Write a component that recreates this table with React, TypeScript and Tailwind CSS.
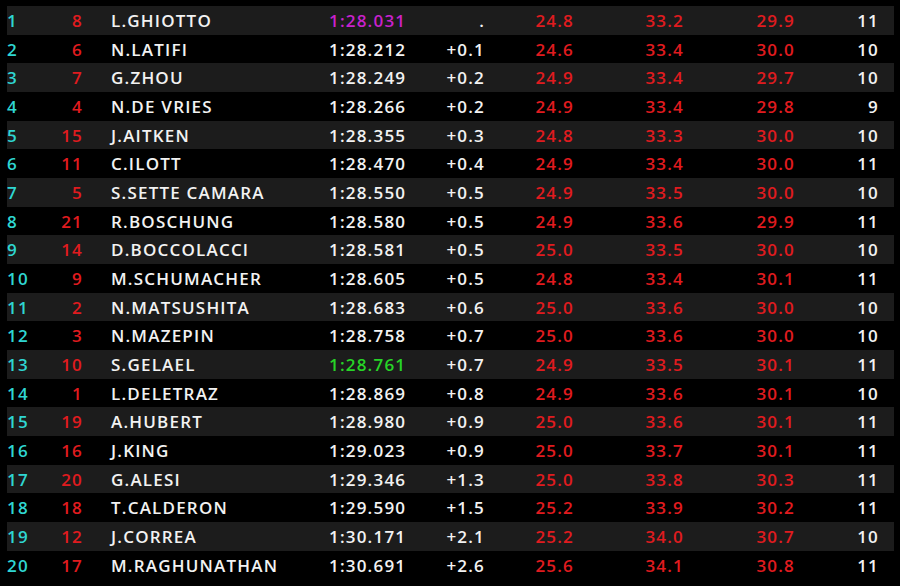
type Row = {
  pos: number
  car: number
  name: string
  time: string
  gap: string
  s1: string
  s2: string
  s3: string
  laps: number
  best?: 'purple' | 'green'
}

const rows: Row[] = [
  { pos: 1, car: 8, name: 'L.GHIOTTO', time: '1:28.031', gap: '.', s1: '24.8', s2: '33.2', s3: '29.9', laps: 11, best: 'purple' },
  { pos: 2, car: 6, name: 'N.LATIFI', time: '1:28.212', gap: '+0.1', s1: '24.6', s2: '33.4', s3: '30.0', laps: 10 },
  { pos: 3, car: 7, name: 'G.ZHOU', time: '1:28.249', gap: '+0.2', s1: '24.9', s2: '33.4', s3: '29.7', laps: 10 },
  { pos: 4, car: 4, name: 'N.DE VRIES', time: '1:28.266', gap: '+0.2', s1: '24.9', s2: '33.4', s3: '29.8', laps: 9 },
  { pos: 5, car: 15, name: 'J.AITKEN', time: '1:28.355', gap: '+0.3', s1: '24.8', s2: '33.3', s3: '30.0', laps: 10 },
  { pos: 6, car: 11, name: 'C.ILOTT', time: '1:28.470', gap: '+0.4', s1: '24.9', s2: '33.4', s3: '30.0', laps: 11 },
  { pos: 7, car: 5, name: 'S.SETTE CAMARA', time: '1:28.550', gap: '+0.5', s1: '24.9', s2: '33.5', s3: '30.0', laps: 10 },
  { pos: 8, car: 21, name: 'R.BOSCHUNG', time: '1:28.580', gap: '+0.5', s1: '24.9', s2: '33.6', s3: '29.9', laps: 11 },
  { pos: 9, car: 14, name: 'D.BOCCOLACCI', time: '1:28.581', gap: '+0.5', s1: '25.0', s2: '33.5', s3: '30.0', laps: 10 },
  { pos: 10, car: 9, name: 'M.SCHUMACHER', time: '1:28.605', gap: '+0.5', s1: '24.8', s2: '33.4', s3: '30.1', laps: 11 },
  { pos: 11, car: 2, name: 'N.MATSUSHITA', time: '1:28.683', gap: '+0.6', s1: '25.0', s2: '33.6', s3: '30.0', laps: 10 },
  { pos: 12, car: 3, name: 'N.MAZEPIN', time: '1:28.758', gap: '+0.7', s1: '25.0', s2: '33.6', s3: '30.0', laps: 10 },
  { pos: 13, car: 10, name: 'S.GELAEL', time: '1:28.761', gap: '+0.7', s1: '24.9', s2: '33.5', s3: '30.1', laps: 11, best: 'green' },
  { pos: 14, car: 1, name: 'L.DELETRAZ', time: '1:28.869', gap: '+0.8', s1: '24.9', s2: '33.6', s3: '30.1', laps: 10 },
  { pos: 15, car: 19, name: 'A.HUBERT', time: '1:28.980', gap: '+0.9', s1: '25.0', s2: '33.6', s3: '30.1', laps: 11 },
  { pos: 16, car: 16, name: 'J.KING', time: '1:29.023', gap: '+0.9', s1: '25.0', s2: '33.7', s3: '30.1', laps: 11 },
  { pos: 17, car: 20, name: 'G.ALESI', time: '1:29.346', gap: '+1.3', s1: '25.0', s2: '33.8', s3: '30.3', laps: 11 },
  { pos: 18, car: 18, name: 'T.CALDERON', time: '1:29.590', gap: '+1.5', s1: '25.2', s2: '33.9', s3: '30.2', laps: 11 },
  { pos: 19, car: 12, name: 'J.CORREA', time: '1:30.171', gap: '+2.1', s1: '25.2', s2: '34.0', s3: '30.7', laps: 10 },
  { pos: 20, car: 17, name: 'M.RAGHUNATHAN', time: '1:30.691', gap: '+2.6', s1: '25.6', s2: '34.1', s3: '30.8', laps: 11 },
]

export default function App() {
  return (
    <div
      className="w-[900px] h-[586px] bg-black pt-[6px] pl-[7px] overflow-hidden text-[17px] font-semibold tracking-[1.2px] text-[#f2f2f2]"
      style={{ fontFamily: '"Open Sans", "Noto Sans", sans-serif' }}
    >
      {rows.map((r, i) => (
        <div
          key={r.pos}
          className={`flex items-center w-[887px] h-[28.68px] leading-none ${i % 2 === 0 ? 'bg-[#1c1c1c]' : 'bg-black'}`}
        >
          <div className="w-[40px] text-[#2fd6d2]">{r.pos}</div>
          <div className="w-[36px] text-right text-[#e01b1f]">{r.car}</div>
          <div className="w-[218px] pl-[28px] box-content">{r.name}</div>
          <div
            className={`w-[100px] ${r.best === 'purple' ? 'text-[#c822cc]' : r.best === 'green' ? 'text-[#27d427]' : ''}`}
          >
            {r.time}
          </div>
          <div className="w-[56px] text-right">{r.gap}</div>
          <div className="w-[89px] text-right text-[#e01b1f]">{r.s1}</div>
          <div className="w-[110px] text-right text-[#e01b1f]">{r.s2}</div>
          <div className="w-[111px] text-right text-[#e01b1f]">{r.s3}</div>
          <div className="w-[84px] text-right">{r.laps}</div>
        </div>
      ))}
    </div>
  )
}
